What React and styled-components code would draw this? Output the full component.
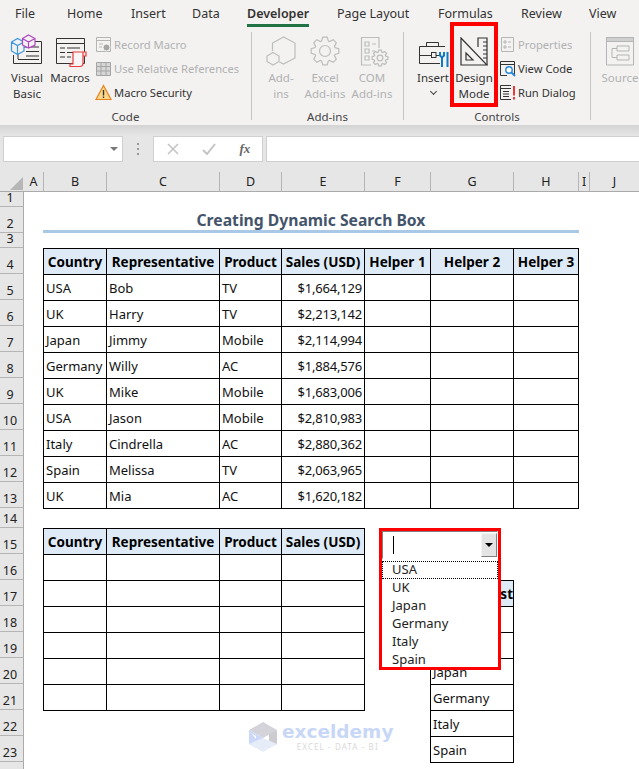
import React from 'react';
import styled, { createGlobalStyle } from 'styled-components';

const GlobalStyle = createGlobalStyle`
  html, body {
    margin: 0;
    padding: 0;
    background: #fff;
    overflow: hidden;
  }
  body {
    font-family: "Noto Sans", "Open Sans", sans-serif;
  }
  * {
    box-sizing: border-box;
  }
`

const Page = styled.div`
  width: 639px;
  height: 769px;
  overflow: hidden;
  position: relative;
`

/* ribbon */
const Ribbon = styled.div`
  height: 125px;
  background: #f3f2f1;
  color: #262626;
  font-size: 12px;
`

const Tabs = styled.div`
  display: flex;
  height: 27px;
  padding-left: 15px;
`

const Tab = styled.div`
  position: relative;
  width: ${({ $w }) => $w}px;
  padding-top: 5px;
  line-height: 18px;
  font-size: 12.5px;
  white-space: nowrap;
  color: #333;
  font-weight: ${({ $active }) => ($active ? 600 : 400)};
  ${({ $active }) => $active && `
    &::after {
      content: "";
      position: absolute;
      left: 0;
      top: 24px;
      width: 62px;
      height: 3px;
      background: #217346;
    }
  `}
`

const Groups = styled.div`
  display: flex;
  height: 94px;
  margin-top: 6px;
`

const Group = styled.div`
  width: ${({ $w }) => $w}px;
  flex: none;
  border-right: ${({ $noLine }) => ($noLine ? 'none' : '1px solid #c8c6c4')};
  display: flex;
  flex-direction: column;
  height: 88px;
  margin-top: -1px;
`

const GroupBody = styled.div`
  display: flex;
  flex: none;
  height: 77px;
  padding-left: ${({ $pad }) => $pad || 0}px;
`

const GroupLabel = styled.div`
  flex: none;
  text-align: center;
  font-size: 11.5px;
  line-height: 16px;
  color: #444;
`

const BigButton = styled.div`
  width: ${({ $w }) => $w}px;
  flex: none;
  display: flex;
  flex-direction: column;
  align-items: center;
  text-align: center;
  font-size: 11.5px;
  line-height: 16px;
  white-space: nowrap;
  color: ${({ $off }) => ($off ? '#b1b1b1' : '#333')};
  & svg {
    display: block;
    flex: none;
  }
`

const DesignButton = styled(BigButton)`
  position: relative;
  height: 85px;
  margin: -10px 0 0 -2px;
  border: 4px solid #f00;
  padding-top: 11px;
  & svg {
    margin-bottom: 4px;
  }
`

const SmallList = styled.div`
  display: flex;
  flex-direction: column;
  margin-left: ${({ $ml }) => $ml || 0}px;
`

const SmallItem = styled.div`
  height: 24px;
  display: flex;
  align-items: center;
  gap: 2px;
  font-size: 11.2px;
  white-space: nowrap;
  color: ${({ $off }) => ($off ? '#b1b1b1' : '#333')};
  & svg {
    flex: none;
  }
`

const Chevron = styled.span`
  display: block;
  width: 5px;
  height: 5px;
  margin-top: 3px;
  border-right: 1px solid #444;
  border-bottom: 1px solid #444;
  transform: rotate(45deg);
`

const RibbonShade = styled.div`
  height: 11px;
  background: linear-gradient(#d4d4d4, #e6e6e6);
`

/* formula bar */
const FormulaBar = styled.div`
  height: 36px;
  background: #e6e6e6;
  display: flex;
  padding: 0 0 0 3px;
`

const NameBox = styled.div`
  width: 120px;
  height: 26px;
  background: #fff;
  border: 1px solid #d0d0d0;
  display: flex;
  align-items: center;
  justify-content: flex-end;
  padding-right: 4px;
`

const Caret = styled.span`
  width: 0;
  height: 0;
  border-left: 4px solid transparent;
  border-right: 4px solid transparent;
  border-top: 4px solid #777;
`

const Grip = styled.div`
  width: 30px;
  height: 26px;
  display: flex;
  flex-direction: column;
  align-items: center;
  justify-content: center;
  gap: 3px;
  & span {
    width: 2px;
    height: 2px;
    background: #999;
  }
`

const FxBox = styled.div`
  width: 110px;
  height: 26px;
  background: #fff;
  border: 1px solid #d0d0d0;
  display: flex;
  align-items: center;
  justify-content: space-around;
  padding: 0 0 0 1px;
  color: #bbb;
`

const Fx = styled.span`
  font-family: "Liberation Serif", serif;
  font-style: italic;
  font-weight: 700;
  font-size: 13px;
  color: #666;
`

const FormulaInput = styled.div`
  flex: 1;
  height: 26px;
  margin-left: 3px;
  background: #fff;
  border: 1px solid #d0d0d0;
  border-right: none;
`

/* headers */
const ColumnHeaders = styled.div`
  height: 20px;
  background: #e6e6e6;
  border-bottom: 1px solid #ababab;
  display: flex;
`

const Corner = styled.div`
  width: 24px;
  position: relative;
  &::after {
    content: "";
    position: absolute;
    right: 1px;
    bottom: 1px;
    border-left: 13px solid transparent;
    border-bottom: 13px solid #b6b6b6;
  }
`

const ColumnHeader = styled.div`
  width: ${({ $w }) => $w}px;
  flex: ${({ $grow }) => ($grow ? 1 : 'none')};
  text-align: center;
  font-size: 12.5px;
  line-height: 19px;
  color: #222;
  border-right: ${({ $grow }) => ($grow ? 'none' : '1px solid #b5b5b5')};
`

const SheetArea = styled.div`
  display: flex;
  height: 577px;
`

const RowHeaders = styled.div`
  width: 24px;
  flex: none;
  background: #e6e6e6;
  border-right: 1px solid #ababab;
`

const RowHeader = styled.div`
  height: ${({ $h }) => $h}px;
  border-bottom: 1px solid #b5b5b5;
  display: flex;
  align-items: flex-end;
  justify-content: center;
  font-size: 12.5px;
  line-height: 14px;
  padding: 0 3px 1px 0;
  color: #222;
`

const Sheet = styled.div`
  position: relative;
  flex: 1;
  padding-left: 19px;
  background: #fff;
  font-size: 13px;
  color: #111;
`

const TitleRow = styled.div`
  width: 536px;
  height: 41px;
  display: flex;
  align-items: flex-end;
  justify-content: center;
  border-bottom: 3px solid #a9c8e6;
  margin-bottom: 15px;
  font-size: 15.7px;
  line-height: 20px;
  font-weight: 700;
  color: #44546a;
`

const Table = styled.table`
  border-collapse: collapse;
  table-layout: fixed;
  width: ${({ $w }) => $w}px;
  flex: none;
`

const Row = styled.tr`
  height: 26px;
`

const Head = styled.th`
  border: 1.5px solid #000;
  background: #deebf6;
  font-size: 13.5px;
  font-weight: 700;
  padding: 0;
  white-space: nowrap;
  overflow: hidden;
  text-align: center;
  color: #000;
`

const Cell = styled.td`
  border: 1.5px solid #000;
  padding: 0 2px;
  white-space: nowrap;
  overflow: hidden;
  text-align: ${({ $right }) => ($right ? 'right' : 'left')};
  letter-spacing: ${({ $right }) => ($right ? '-0.2px' : '0')};
`

const Lower = styled.div`
  display: flex;
  align-items: flex-start;
  margin-top: 19px;
`

const ListTable = styled(Table)`
  margin-left: 65px;
  margin-top: 52px;
`

/* combo box laid over the sheet */
const ComboFrame = styled.div`
  position: absolute;
  left: 355px;
  top: 336px;
  width: 122px;
  height: 142px;
  border: 3px solid #f00;
  background: #fff;
  display: flex;
  flex-direction: column;
  overflow: hidden;
`

const ComboInput = styled.div`
  height: 28px;
  flex: none;
  display: flex;
  justify-content: space-between;
  border: 1px solid;
  border-color: #808080 #fff #fff #808080;
  padding: 4px 0 0 10px;
  margin-bottom: 2px;
`

const TextCaret = styled.span`
  display: block;
  width: 1px;
  height: 18px;
  background: #000;
`

const ComboArrow = styled.div`
  width: 16px;
  height: 24px;
  margin-top: -3px;
  background: #e4e4e4;
  border: 1px solid;
  border-color: #f4f4f4 #808080 #808080 #f4f4f4;
  display: flex;
  align-items: center;
  justify-content: center;
`

const ArrowHead = styled.span`
  width: 0;
  height: 0;
  border-left: 4px solid transparent;
  border-right: 4px solid transparent;
  border-top: 4px solid #000;
`

const ComboItem = styled.div`
  flex: none;
  height: 18px;
  line-height: 17px;
  padding-left: 10px;
  font-size: 13px;
  color: #222;
  ${({ $focus }) => $focus && `
    outline: 1px dotted #000;
    outline-offset: -1px;
  `}
`

/* watermark */
const Watermark = styled.div`
  position: absolute;
  left: 224px;
  top: 529px;
  display: flex;
  align-items: center;
  gap: 4px;
  pointer-events: none;
`

const MarkText = styled.div`
  display: flex;
  flex-direction: column;
  align-items: center;
`

const MarkName = styled.div`
  font-family: "DejaVu Sans", sans-serif;
  font-weight: 700;
  font-size: 18.5px;
  line-height: 20px;
  color: #c8d7f7;
`

const MarkSub = styled.div`
  font-size: 8px;
  line-height: 10px;
  letter-spacing: 1.1px;
  color: #d8d8d8;
`

// toothed outline for the gear icons
function gearPath(cx, cy, outer, inner, teeth) {
  const pts = []
  const step = (Math.PI * 2) / teeth
  for (let i = 0; i < teeth; i++) {
    const a = i * step
    const add = (r, t) => pts.push(`${(cx + r * Math.cos(a + t)).toFixed(1)} ${(cy + r * Math.sin(a + t)).toFixed(1)}`)
    add(inner, -step * 0.42)
    add(outer, -step * 0.2)
    add(outer, step * 0.2)
    add(inner, step * 0.42)
  }
  return `M${pts.join('L')}Z`
}

const VisualBasicIcon = () => (
  <svg width="42" height="38" viewBox="0 0 42 38" fill="none">
    <path d="M13 9.5H35.5V31.5H7.5V23M10 15H33M12 15V27M20 19.5H33M20 24H33M12 27.5H33" stroke="#333" />
    <path d="M5.5 10L11.5 6.5L18 10V19L11.5 22.5L5.5 19ZM5.5 10L11.5 13.5L18 10M11.5 13.5V22.5" stroke="#3a96dd" strokeWidth="1.2" fill="#f3f2f1" />
    <path d="M16.5 6.5L22.5 3L29 6.5V13L22.5 16L16.5 13ZM16.5 6.5L22.5 10L29 6.5M22.5 10V16" stroke="#b146c2" strokeWidth="1.2" fill="#f3f2f1" />
  </svg>
)

const MacrosIcon = () => (
  <svg width="42" height="38" viewBox="0 0 42 38" fill="none">
    <path d="M7.5 6.5H35.5V31.5H7.5ZM7.5 11.5H35.5M11 16H16M18 16H31M11 20.5H16M18 20.5H27M11 25H16M18 25H22" stroke="#333" />
    <path d="M24 20H34V31C34 33.5 33 34.5 31 34.5H21V32H24ZM34 20H37V24H34" stroke="#e83a3a" strokeWidth="1.2" fill="#f7f5f5" />
  </svg>
)

const RecordIcon = () => (
  <svg width="17" height="17" viewBox="0 0 17 17" fill="none">
    <path d="M1.5 1.5H15.5V15.5H1.5ZM1.5 4.5H15.5M4 8H8M4 11H7" stroke="#b5b5b5" />
    <circle cx="11.5" cy="11.5" r="3.5" fill="#a5a5a5" stroke="#f3f2f1" />
  </svg>
)

const GridIcon = () => (
  <svg width="17" height="17" viewBox="0 0 17 17">
    <path d="M1.5 2.5H15.5V15.5H1.5ZM1.5 6.5H15.5M1.5 11H15.5M6 2.5V15.5M11 2.5V15.5" fill="#d6d6d6" stroke="#a5a5a5" />
  </svg>
)

const WarningIcon = () => (
  <svg width="17" height="17" viewBox="0 0 17 17">
    <path d="M8.5 1.5L16 15.5H1Z" fill="#fbd98a" stroke="#e8821e" strokeWidth="1.2" />
    <path d="M8.5 6V11.5M8.5 12.5V14" stroke="#333" strokeWidth="1.4" />
  </svg>
)

const AddInsIcon = () => (
  <svg width="42" height="38" viewBox="0 0 42 38" fill="none" stroke="#bdbdbd" strokeWidth="1.2">
    <path d="M12.5 19V11L23.5 5L35 11V26L23.5 32L19.5 30" />
    <path d="M13 20.5L19 24V29.5L13 33L7 29.5V24Z" />
  </svg>
)

const GearIcon = () => (
  <svg width="42" height="38" viewBox="0 0 42 38" fill="none" stroke="#bdbdbd" strokeWidth="1.2">
    <path d={gearPath(21, 19, 14, 10.5, 8)} />
    <circle cx="21" cy="19" r="5.5" />
  </svg>
)

const ComIcon = () => (
  <svg width="42" height="38" viewBox="0 0 42 38" fill="none" stroke="#bdbdbd" strokeWidth="1.2">
    <path d="M28 16V5.5H10.5V33H20M14 10H18V14H14ZM14 17H18V21H14ZM14 24H18V28H14ZM21 12H25M21 19H24" />
    <path d={gearPath(29, 26, 8, 6, 8)} />
    <circle cx="29" cy="26" r="2.8" />
  </svg>
)

const InsertIcon = () => (
  <svg width="42" height="38" viewBox="0 0 42 38" fill="none">
    <path d="M7.5 14.5H33M7.5 14.5V31.5H28M7.5 23.5H19M24 23.5H27M14.5 14V10.5H26.5V14" stroke="#333" />
    <rect x="19.5" y="20.5" width="4.5" height="5" stroke="#333" />
    <path d="M28 20V23.5L30 25.5V35M32 20V23.5L30 25.5M35.5 20V35" stroke="#0f7cc2" strokeWidth="2" />
  </svg>
)

const DesignIcon = () => (
  <svg width="28" height="29" viewBox="0 0 28 29" fill="none" stroke="#333" strokeWidth="1.2">
    <path d="M1 1L27 28H1ZM6 16V23H13Z" />
    <path d="M18 10V1H27V28M23 5H27M23 9H27M23 13H27M23 17H27M23 21H27" />
  </svg>
)

const PropertiesIcon = () => (
  <svg width="17" height="17" viewBox="0 0 17 17" fill="none" stroke="#b5b5b5">
    <path d="M2.5 1.5H14.5V15.5H2.5ZM5 5H7V7H5ZM5 10H7V12H5ZM9 6H12M9 11H12" />
  </svg>
)

const ViewCodeIcon = () => (
  <svg width="17" height="17" viewBox="0 0 17 17" fill="none">
    <path d="M1.5 1.5H15.5V15M1.5 1.5V15.5H8M1.5 4.5H15.5" stroke="#333" />
    <circle cx="10" cy="10" r="3.2" stroke="#2488d8" strokeWidth="1.4" fill="#fff" />
    <path d="M12.5 12.5L16 16" stroke="#2488d8" strokeWidth="1.8" />
  </svg>
)

const RunDialogIcon = () => (
  <svg width="17" height="17" viewBox="0 0 17 17" fill="none">
    <path d="M12 1.5H1.5V15.5H12M1.5 4.5H12M4 7.5H10M4 10H10M4 12.5H10" stroke="#333" />
    <path d="M15 2V11.5M15 13V15.5" stroke="#e83a3a" strokeWidth="2" />
  </svg>
)

const SourceIcon = () => (
  <svg width="30" height="38" viewBox="0 0 30 38" fill="none" stroke="#b5b5b5">
    <path d="M1.5 5.5H28.5V33H1.5ZM12 14H24V19H12ZM12 23H24V28H12ZM7 16.5H12M7 16.5V25.5H12" />
    <rect x="1.5" y="5.5" width="27" height="4" fill="#cfcfcf" />
  </svg>
)

const CloseMark = () => (
  <svg width="12" height="12" viewBox="0 0 12 12" fill="none" stroke="#c4c4c4" strokeWidth="1.6">
    <path d="M1 1L11 11M11 1L1 11" />
  </svg>
)

const CheckMark = () => (
  <svg width="14" height="12" viewBox="0 0 14 12" fill="none" stroke="#c4c4c4" strokeWidth="2">
    <path d="M1 7L5 11L13 1" />
  </svg>
)

const LogoMark = () => (
  <svg width="30" height="32" viewBox="0 0 30 32">
    <path d="M15 1L29 9L15 17L1 9Z" fill="#c4c4cc" opacity=".75" />
    <path d="M1 9L15 17V24L8 20V15L1 11Z" fill="#cbd8f7" />
    <path d="M1 9V23L8 27V18Z" fill="#cbd8f7" />
    <path d="M29 9V23L21 27V13Z" fill="#cbcbd0" />
    <path d="M1 23L15 31L29 23L15 17Z" fill="#e6edf8" />
  </svg>
)

const columns = [
  ['A', 20], ['B', 63], ['C', 113], ['D', 62], ['E', 83], ['F', 66], ['G', 83], ['H', 65], ['I', 11],
]

const rowHeights = [15, 26, 15, 26, 26, 26, 26, 26, 26, 26, 26, 26, 26, 20, 26, 26, 26, 26, 26, 26, 26, 26, 26]

const salesRows = [
  ['USA', 'Bob', 'TV', '$1,664,129'],
  ['UK', 'Harry', 'TV', '$2,213,142'],
  ['Japan', 'Jimmy', 'Mobile', '$2,114,994'],
  ['Germany', 'Willy', 'AC', '$1,884,576'],
  ['UK', 'Mike', 'Mobile', '$1,683,006'],
  ['USA', 'Jason', 'Mobile', '$2,810,983'],
  ['Italy', 'Cindrella', 'AC', '$2,880,362'],
  ['Spain', 'Melissa', 'TV', '$2,063,965'],
  ['UK', 'Mia', 'AC', '$1,620,182'],
]

const countries = ['USA', 'UK', 'Japan', 'Germany', 'Italy', 'Spain']
const dataWidths = [63, 113, 62, 83]
const dataHeads = ['Country', 'Representative', 'Product', 'Sales (USD)']

function Colgroup({ widths }) {
  return (
    <colgroup>
      {widths.map((w, i) => <col key={i} style={{ width: w }} />)}
    </colgroup>
  )
}

export default function App() {
  return (
    <Page>
      <GlobalStyle />
      <Ribbon>
        <Tabs>
          <Tab $w={52}>File</Tab>
          <Tab $w={64}>Home</Tab>
          <Tab $w={61}>Insert</Tab>
          <Tab $w={55}>Data</Tab>
          <Tab $w={90} $active>Developer</Tab>
          <Tab $w={101}>Page Layout</Tab>
          <Tab $w={83}>Formulas</Tab>
          <Tab $w={68}>Review</Tab>
          <Tab $w={40}>View</Tab>
        </Tabs>
        <Groups>
          <Group $w={252}>
            <GroupBody $pad={6}>
              <BigButton $w={42}><VisualBasicIcon />Visual<br />Basic</BigButton>
              <BigButton $w={44}><MacrosIcon />Macros</BigButton>
              <SmallList $ml={3}>
                <SmallItem $off><RecordIcon />Record Macro</SmallItem>
                <SmallItem $off><GridIcon />Use Relative References</SmallItem>
                <SmallItem><WarningIcon />Macro Security</SmallItem>
              </SmallList>
            </GroupBody>
            <GroupLabel>Code</GroupLabel>
          </Group>
          <Group $w={152}>
            <GroupBody $pad={7}>
              <BigButton $w={44} $off><AddInsIcon />Add-<br />ins</BigButton>
              <BigButton $w={44} $off><GearIcon />Excel<br />Add-ins</BigButton>
              <BigButton $w={50} $off><ComIcon />COM<br />Add-ins</BigButton>
            </GroupBody>
            <GroupLabel>Add-ins</GroupLabel>
          </Group>
          <Group $w={187}>
            <GroupBody $pad={10}>
              <BigButton $w={38}><InsertIcon />Insert<Chevron /></BigButton>
              <DesignButton $w={48}><DesignIcon />Design<br />Mode</DesignButton>
              <SmallList $ml={1}>
                <SmallItem $off><PropertiesIcon />Properties</SmallItem>
                <SmallItem><ViewCodeIcon />View Code</SmallItem>
                <SmallItem><RunDialogIcon />Run Dialog</SmallItem>
              </SmallList>
            </GroupBody>
            <GroupLabel>Controls</GroupLabel>
          </Group>
          <Group $w={48} $noLine>
            <GroupBody $pad={9}>
              <BigButton $w={40} $off><SourceIcon />Source</BigButton>
            </GroupBody>
          </Group>
        </Groups>
      </Ribbon>
      <RibbonShade />
      <FormulaBar>
        <NameBox><Caret /></NameBox>
        <Grip><span /><span /><span /></Grip>
        <FxBox><CloseMark /><CheckMark /><Fx>fx</Fx></FxBox>
        <FormulaInput />
      </FormulaBar>
      <ColumnHeaders>
        <Corner />
        {columns.map(([name, w]) => <ColumnHeader key={name} $w={w}>{name}</ColumnHeader>)}
        <ColumnHeader $grow>J</ColumnHeader>
      </ColumnHeaders>
      <SheetArea>
        <RowHeaders>
          {rowHeights.map((h, i) => <RowHeader key={i} $h={h}>{i + 1}</RowHeader>)}
        </RowHeaders>
        <Sheet>
          <TitleRow>Creating Dynamic Search Box</TitleRow>
          <Table $w={535}>
            <Colgroup widths={[...dataWidths, 66, 83, 65]} />
            <tbody>
              <Row>
                {[...dataHeads, 'Helper 1', 'Helper 2', 'Helper 3'].map((h) => <Head key={h}>{h}</Head>)}
              </Row>
              {salesRows.map((r, i) => (
                <Row key={i}>
                  <Cell>{r[0]}</Cell>
                  <Cell>{r[1]}</Cell>
                  <Cell>{r[2]}</Cell>
                  <Cell $right>{r[3]}</Cell>
                  <Cell />
                  <Cell />
                  <Cell />
                </Row>
              ))}
            </tbody>
          </Table>
          <Lower>
            <Table $w={321}>
              <Colgroup widths={dataWidths} />
              <tbody>
                <Row>
                  {dataHeads.map((h) => <Head key={h}>{h}</Head>)}
                </Row>
                {[0, 1, 2, 3, 4, 5].map((i) => (
                  <Row key={i}>
                    <Cell /><Cell /><Cell /><Cell />
                  </Row>
                ))}
              </tbody>
            </Table>
            <ListTable $w={83}>
              <Colgroup widths={[83]} />
              <tbody>
                <Row><Head>Country List</Head></Row>
                {countries.map((c) => (
                  <Row key={c}><Cell>{c}</Cell></Row>
                ))}
              </tbody>
            </ListTable>
          </Lower>
          <ComboFrame>
            <ComboInput>
              <TextCaret />
              <ComboArrow><ArrowHead /></ComboArrow>
            </ComboInput>
            {countries.map((c, i) => <ComboItem key={c} $focus={i === 0}>{c}</ComboItem>)}
          </ComboFrame>
          <Watermark>
            <LogoMark />
            <MarkText>
              <MarkName>exceldemy</MarkName>
              <MarkSub>EXCEL - DATA - BI</MarkSub>
            </MarkText>
          </Watermark>
        </Sheet>
      </SheetArea>
    </Page>
  )
}
